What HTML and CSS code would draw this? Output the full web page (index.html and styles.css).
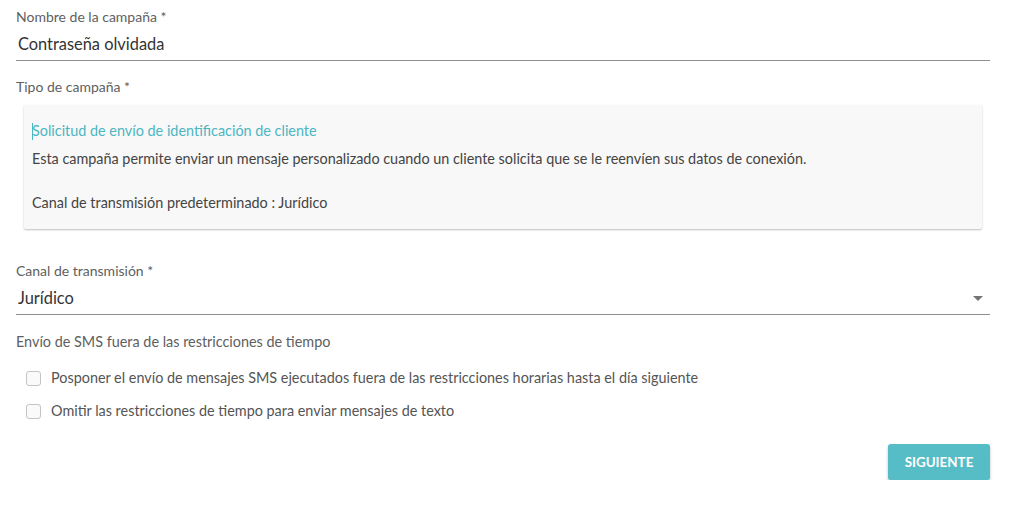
FILE: index.html
```html
<!DOCTYPE html>
<html lang="es">
<head>
<meta charset="utf-8">
<title>Campaña</title>
<link rel="stylesheet" href="styles.css">
</head>
<body>
<div class="form">
  <div class="label first">Nombre de la campaña *</div>
  <div class="input">Contraseña olvidada</div>

  <div class="label l2">Tipo de campaña *</div>
  <div class="card">
    <div class="card-title"><span class="caret"></span>Solicitud de envío de identificación de cliente</div>
    <div class="card-desc">
      <div>Esta campaña permite enviar un mensaje personalizado cuando un cliente solicita que se le reenvíen sus datos de conexión.</div>
      <div class="blank">&nbsp;</div>
      <div>Canal de transmisión predeterminado : Jurídico</div>
    </div>
  </div>

  <div class="label l3">Canal de transmisión *</div>
  <div class="input select">
    <span>Jurídico</span>
    <span class="arrow"></span>
  </div>

  <div class="label l4">Envío de SMS fuera de las restricciones de tiempo</div>
  <div class="checks">
    <label class="check"><span class="box"></span><span>Posponer el envío de mensajes SMS ejecutados fuera de las restricciones horarias hasta el día siguiente</span></label>
    <label class="check"><span class="box"></span><span>Omitir las restricciones de tiempo para enviar mensajes de texto</span></label>
  </div>

  <div class="actions">
    <button class="btn">SIGUIENTE</button>
  </div>
</div>
</body>
</html>
```
FILE: styles.css
```css
html, body {
  margin: 0;
  padding: 0;
  background: #ffffff;
}
body {
  font-family: Lato, "Open Sans", "Liberation Sans", sans-serif;
  color: #333;
}
.form {
  width: 974px;
  margin-left: 16px;
  display: flex;
  flex-direction: column;
}
.label {
  font-size: 14px;
  line-height: 18px;
  color: #606060;
}
.label.first { margin-top: 8px; }
.label.l2 { margin-top: 17px; }
.label.l3 { margin-top: 33px; }
.label.l4 { margin-top: 18px; }
.label.l4 { font-size: 14.4px; }
.input {
  margin-top: 6px;
  font-size: 16.4px;
  line-height: 24px;
  color: #333;
  padding: 0 2px 4px 2px;
  border-bottom: 1px solid #8f8f8f;
}
.select {
  display: flex;
  justify-content: space-between;
  align-items: center;
}
.arrow {
  width: 0;
  height: 0;
  border-left: 5px solid transparent;
  border-right: 5px solid transparent;
  border-top: 5px solid #757575;
  margin-right: 5px;
}
.card {
  margin: 9px 8px 0 8px;
  background: #f8f8f8;
  border-radius: 2px;
  box-shadow: 0 1px 2px rgba(0,0,0,0.25);
  padding: 16px 8px 15px 8px;
}
.card-title {
  font-size: 14.4px;
  line-height: 20px;
  color: #4cb6c2;
  position: relative;
}
.caret {
  position: absolute;
  left: 0;
  top: 2px;
  width: 1px;
  height: 17px;
  background: #4cb6c2;
}
.card-desc {
  margin-top: 7px;
  font-size: 14.4px;
  line-height: 22px;
  color: #444;
}
.checks {
  margin-top: 16px;
  display: flex;
  flex-direction: column;
  gap: 11px;
}
.check {
  display: flex;
  align-items: center;
  gap: 10px;
  padding-left: 10px;
  font-size: 14.4px;
  line-height: 22px;
  color: #555;
}
.box {
  width: 13px;
  height: 13px;
  border: 1px solid #c4c4c4;
  border-radius: 3px;
  background: #fafafa;
  flex: none;
}
.actions {
  margin-top: 22px;
  display: flex;
  justify-content: flex-end;
}
.btn {
  width: 102px;
  height: 36px;
  border: none;
  border-radius: 3px;
  background: #56bcc6;
  color: #fff;
  font-family: Lato, "Open Sans", sans-serif;
  font-weight: 700;
  font-size: 13.4px;
  box-shadow: 0 2px 3px rgba(0,0,0,0.25);
  padding: 0;
}
```
